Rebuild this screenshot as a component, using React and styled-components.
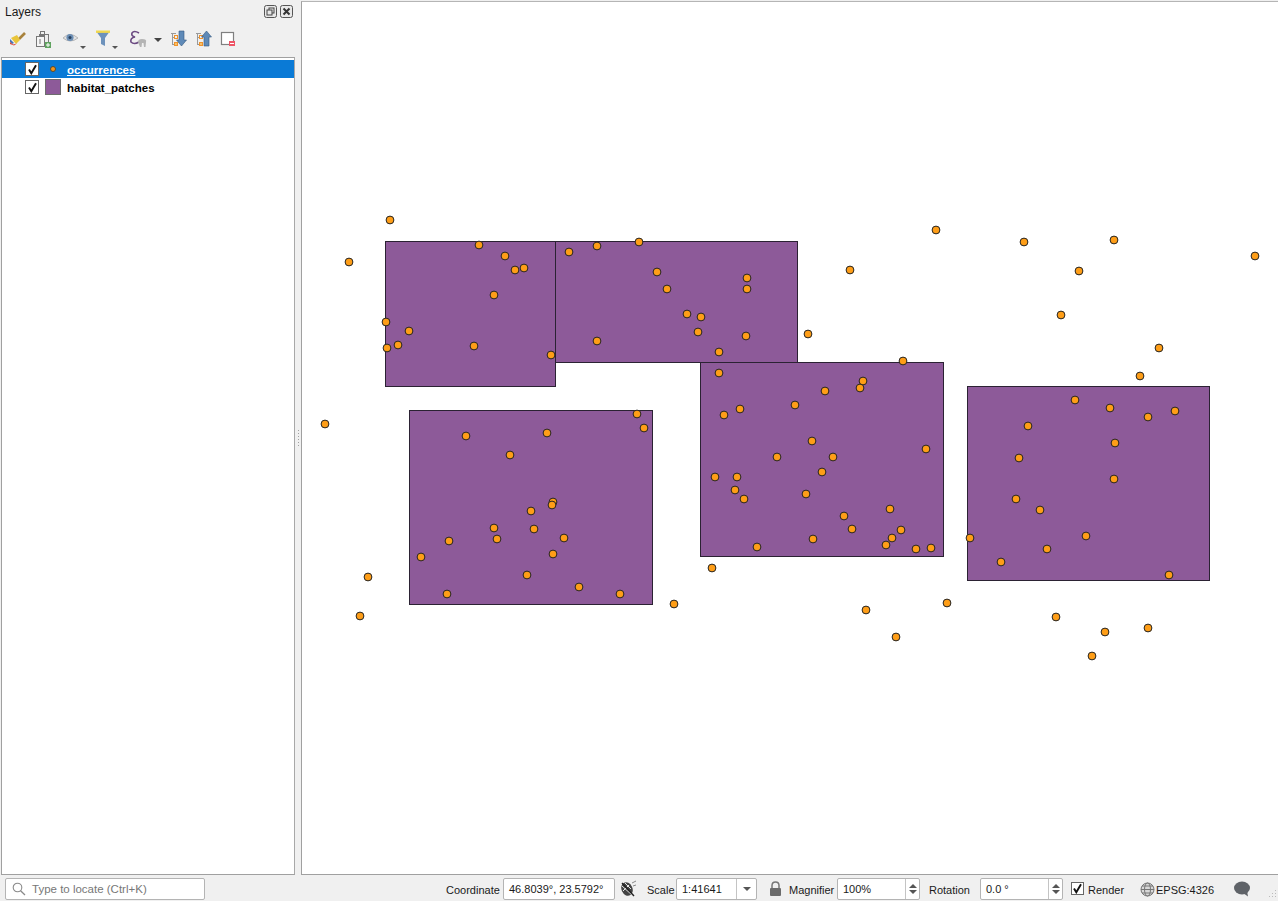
import React from 'react';
import styled, { createGlobalStyle } from 'styled-components';

const GlobalStyle = createGlobalStyle`
  html, body {
    margin: 0;
    padding: 0;
    height: 100%;
    overflow: hidden;
    background: #f0f0f0;
  }
  #root { height: 100%; }
`;

const Window = styled.div`
  width: 1278px;
  height: 901px;
  display: flex;
  flex-direction: column;
  background: #f0f0f0;
  font-family: 'Liberation Sans', Arial, sans-serif;
  font-size: 11px;
  color: #1a1a1a;
  overflow: hidden;
`;

const Main = styled.div`
  flex: 1;
  min-height: 0;
  display: flex;
  padding: 1px 0 0 1px;
`;

const Dock = styled.aside`
  width: 294px;
  display: flex;
  flex-direction: column;
`;

const DockTitle = styled.div`
  height: 21px;
  display: flex;
  align-items: center;
  justify-content: space-between;
  padding: 0 2px 0 4px;
  box-sizing: border-box;
  font-size: 12px;
`;

const DockButtons = styled.div`
  display: flex;
  gap: 3px;
  align-items: center;
`;

const Toolbar = styled.div`
  height: 35px;
  display: flex;
  align-items: center;
  padding-left: 7px;
  box-sizing: border-box;
`;

const ToolButton = styled.span`
  width: ${p => p.$w || 18}px;
  height: 20px;
  margin-right: ${p => p.$gap || 0}px;
  flex: none;
  display: block;
  svg { display: block; }
`;

const Tree = styled.div`
  flex: 1;
  background: #fff;
  border: 1px solid #a0a0a0;
  border-right-color: #a8a8a8;
  padding-top: 2px;
`;

const Row = styled.div`
  height: 18px;
  display: flex;
  align-items: center;
  padding-left: 23px;
  background: ${p => (p.$selected ? '#0a7ad6' : 'transparent')};
  color: ${p => (p.$selected ? '#fff' : '#000')};
  font-weight: 700;
  font-size: 11.5px;
`;

const RowText = styled.span`
  padding-top: 2px;
  text-decoration: ${p => (p.$selected ? 'underline' : 'none')};
`;

const Check = styled.span`
  width: 14px;
  height: 14px;
  flex: none;
  box-sizing: border-box;
  background: #fff;
  border: 1px solid #666;
  display: flex;
  align-items: center;
  justify-content: center;
`;

const Swatch = styled.span`
  width: 16px;
  height: 16px;
  margin-left: 6px;
  margin-right: 6px;
  flex: none;
  box-sizing: border-box;
  display: flex;
  align-items: center;
  justify-content: center;
  background: ${p => p.$fill || 'transparent'};
  border: ${p => (p.$fill ? '1px solid #6d6d6d' : 'none')};
`;

const Dot = styled.span`
  width: 6px;
  height: 6px;
  border-radius: 50%;
  background: #f5931a;
  border: 1px solid #5a4a2a;
  box-sizing: border-box;
`;

const Splitter = styled.div`
  width: 6px;
  flex: none;
  display: flex;
  flex-direction: column;
  align-items: center;
  justify-content: center;
  gap: 2px;
  box-sizing: border-box;
`;

const Grip = styled.i`
  width: 1px;
  height: 1px;
  background: #a0a0a0;
`;

const MapPane = styled.main`
  flex: 1;
  background: #fff;
  border-left: 1px solid #a0a0a0;
  border-top: 1px solid #b5b5b5;
  border-bottom: 1px solid #a0a0a0;
  svg { display: block; }
`;

const StatusBar = styled.footer`
  height: 26px;
  flex: none;
  display: flex;
  align-items: flex-start;
  box-sizing: border-box;
  padding: 3px 0 0 5px;
  position: relative;
`;

const Locator = styled.div`
  width: 200px;
  height: 22px;
  box-sizing: border-box;
  background: #fff;
  border: 1px solid #b4b4b4;
  border-radius: 2px;
  display: flex;
  align-items: center;
  gap: 6px;
  padding-left: 6px;
  color: #777;
  font-size: 11.5px;
  margin-right: 241px;
`;

const Label = styled.span`
  height: 22px;
  line-height: 24px;
  margin-left: ${p => p.$left || 0}px;
  white-space: nowrap;
  width: ${p => p.$w}px;
  flex: none;
`;

const Field = styled.div`
  width: ${p => p.$w}px;
  height: 22px;
  margin-left: ${p => p.$left || 0}px;
  flex: none;
  box-sizing: border-box;
  background: #fff;
  border: 1px solid #b4b4b4;
  border-radius: 2px;
  display: flex;
  align-items: center;
  justify-content: space-between;
  padding-left: 5px;
`;

const ComboArrow = styled.span`
  width: 20px;
  height: 20px;
  box-sizing: border-box;
  border-left: 1px solid #c4c4c4;
  display: flex;
  align-items: center;
  justify-content: center;
  &::after {
    content: '';
    border-left: 4px solid transparent;
    border-right: 4px solid transparent;
    border-top: 4px solid #555;
  }
`;

const Spin = styled.span`
  width: 14px;
  height: 20px;
  box-sizing: border-box;
  border-left: 1px solid #c4c4c4;
  display: flex;
  flex-direction: column;
  align-items: center;
  justify-content: center;
  gap: 2px;
  &::before {
    content: '';
    border-left: 4px solid transparent;
    border-right: 4px solid transparent;
    border-bottom: 4px solid #555;
  }
  &::after {
    content: '';
    border-left: 4px solid transparent;
    border-right: 4px solid transparent;
    border-top: 4px solid #555;
  }
`;

const StatusIcon = styled.span`
  width: ${p => p.$w}px;
  height: 22px;
  margin-left: ${p => p.$left || 0}px;
  flex: none;
  display: flex;
  align-items: center;
  justify-content: center;
`;

const StatusCheck = styled(Check)`
  width: 13px;
  height: 13px;
  margin: 4px 0 0 ${p => p.$left || 0}px;
`;

const SizeGrip = styled.svg`
  position: absolute;
  right: 1px;
  bottom: 1px;
`;

// left, top, right, bottom of each polygon
const patches = [
  [385, 241, 555, 386],
  [555, 241, 797, 362],
  [409, 410, 652, 604],
  [700, 362, 943, 556],
  [967, 386, 1209, 580],
];

const occurrences = [
  [390, 220], [349, 262], [325, 424], [368, 577], [360, 616], [674, 604], [712, 568], [808, 334],
  [850, 270], [936, 230], [1024, 242], [1079, 271], [1114, 240], [1255, 256], [1061, 315], [1159, 348],
  [1140, 376], [903, 361], [866, 610], [896, 637], [947, 603], [1056, 617], [1105, 632], [1148, 628],
  [1092, 656], [970, 538],
  [479, 245], [505, 256], [515, 270], [524, 268], [494, 295], [386, 322], [409, 331], [398, 345],
  [387, 348], [474, 346], [551, 355],
  [569, 252], [597, 246], [639, 242], [657, 272], [667, 289], [747, 278], [747, 289], [687, 314],
  [701, 317], [698, 332], [746, 336], [597, 341], [719, 352],
  [637, 414], [644, 428], [466, 436], [547, 433], [510, 455], [553, 502], [552, 505], [531, 511],
  [494, 528], [534, 529], [449, 541], [497, 539], [564, 538], [421, 557], [553, 554], [527, 575],
  [579, 587], [447, 594], [620, 594],
  [719, 373], [863, 381], [860, 388], [825, 391], [795, 405], [740, 409], [724, 415], [812, 441],
  [926, 449], [777, 457], [833, 457], [822, 472], [715, 477], [737, 477], [735, 490], [744, 499],
  [806, 494], [890, 509], [844, 516], [852, 529], [901, 530], [892, 538], [886, 545], [813, 539],
  [757, 547], [916, 549], [931, 548],
  [1075, 400], [1110, 408], [1148, 417], [1175, 411], [1028, 426], [1115, 443], [1019, 458], [1114, 479],
  [1016, 499], [1040, 510], [1086, 536], [1047, 549], [1001, 562], [1169, 575],
];

const Tick = () => (
  <svg width="11" height="11" viewBox="0 0 11 11">
    <path d="M2 5.5 L4.3 9.3 L9 1.2" fill="none" stroke="#111" strokeWidth="1.9" />
  </svg>
);

const FloatIcon = () => (
  <svg width="13" height="13" viewBox="0 0 13 13">
    <rect x="0.5" y="0.5" width="12" height="12" rx="2" fill="#e8e8e8" stroke="#555" />
    <rect x="5" y="3" width="5" height="5" fill="none" stroke="#444" />
    <rect x="3" y="5" width="5" height="5" fill="#e8e8e8" stroke="#444" />
  </svg>
);

const CloseIcon = () => (
  <svg width="13" height="13" viewBox="0 0 13 13">
    <rect x="0.5" y="0.5" width="12" height="12" rx="2" fill="#e8e8e8" stroke="#555" />
    <path d="M3.5 3.5 L9.5 9.5 M9.5 3.5 L3.5 9.5" stroke="#333" strokeWidth="2" />
  </svg>
);

const StyleIcon = () => (
  <svg width="18" height="20" viewBox="0 0 18 20">
    <path d="M11 9 L17 3" stroke="#a8823c" strokeWidth="2.6" />
    <path d="M3 8 L9 5 L12 10 L8 14 Z" fill="#e9c53a" />
    <path d="M2 9 L6 13 L4 14 L2 12 Z" fill="#4a77b8" />
    <path d="M2 12 L5 14.5 L9 13.5 L6 15.5 L2 14 Z" fill="#d9483c" />
  </svg>
);

const AddGroupIcon = () => (
  <svg width="18" height="20" viewBox="0 0 18 20">
    <rect x="5.5" y="4.5" width="9" height="11" fill="#eee" stroke="#777" />
    <rect x="2.5" y="6.5" width="8" height="10" fill="#f5f5f5" stroke="#777" />
    <rect x="6.5" y="1.5" width="4" height="4" fill="none" stroke="#777" />
    <path d="M6 9 V14" stroke="#777" />
    <rect x="11" y="12" width="6" height="6" fill="#5fa35f" />
    <path d="M14 13 V17 M12 15 H16" stroke="#fff" />
  </svg>
);

const EyeIcon = () => (
  <svg width="24" height="20" viewBox="0 0 24 20">
    <path d="M1 8 Q8 1 16 8 Q8 14 1 8 Z" fill="#e4e4e4" stroke="#b5b5b5" />
    <circle cx="8" cy="7.5" r="3.6" fill="#6d8fb5" />
    <circle cx="8" cy="7.5" r="1.5" fill="#27405f" />
    <path d="M18 16 H24 L21 19 Z" fill="#555" />
  </svg>
);

const FunnelIcon = () => (
  <svg width="24" height="20" viewBox="0 0 24 20">
    <path d="M1 1 H15 L10 8 V16 L6 14 V8 Z" fill="#6d92bb" />
    <rect x="1" y="0.5" width="14" height="2.4" fill="#f1d84d" />
    <path d="M17 16 H23 L20 19 Z" fill="#555" />
  </svg>
);

const ExpressionIcon = () => (
  <svg width="20" height="20" viewBox="0 0 20 20">
    <path d="M10 3 Q5 0 3 3 Q2 6 6 7 Q1 8 2 12 Q5 15 10 12" fill="none" stroke="#6b4a82" strokeWidth="1.6" />
    <path d="M9 12 Q9 9 13 9 Q18 9 17 12 L16.5 17 H15 L14.5 13 H13 L12.5 17 H11 Z" fill="#b4b4b4" />
  </svg>
);

const MenuArrowIcon = () => (
  <svg width="12" height="20" viewBox="0 0 12 20">
    <path d="M1 8 H9 L5 12 Z" fill="#444" />
  </svg>
);

const Tree3Icon = ({ up }) => (
  <svg width="18" height="20" viewBox="0 0 18 20">
    <path d="M1 3.5 H6 M2.5 3 V15 M2.5 7.5 H5 M2.5 14.5 H5" stroke="#999" />
    <rect x="4.5" y="5.5" width="3" height="3" fill="none" stroke="#f0932b" />
    <rect x="4.5" y="12.5" width="3" height="3" fill="#f5c16c" stroke="#f0932b" />
    {up ? (
      <path d="M11.5 1 L16.5 7 H14 V16 H9 V7 H6.5 Z" fill="#5f8ab8" stroke="#36597f" strokeWidth="0.6" />
    ) : (
      <path d="M9 1 H14 V10 H16.5 L11.5 16 L6.5 10 H9 Z" fill="#5f8ab8" stroke="#36597f" strokeWidth="0.6" />
    )}
  </svg>
);

const RemoveIcon = () => (
  <svg width="18" height="20" viewBox="0 0 18 20">
    <rect x="1.5" y="2.5" width="12" height="12" fill="#fff" stroke="#808080" strokeWidth="1.2" />
    <rect x="9" y="11" width="6" height="5" fill="#ee5566" />
    <path d="M10 13.5 H14" stroke="#fff" />
  </svg>
);

const SearchIcon = () => (
  <svg width="14" height="14" viewBox="0 0 14 14">
    <circle cx="5.5" cy="5.5" r="4.3" fill="none" stroke="#8a8a8a" strokeWidth="1.1" />
    <path d="M8.6 8.8 L13 13" stroke="#8a8a8a" strokeWidth="1.3" />
  </svg>
);

const MouseIcon = () => (
  <svg width="17" height="18" viewBox="0 0 17 18">
    <ellipse cx="7" cy="9" rx="5.5" ry="7" fill="#444" transform="rotate(-25 7 9)" />
    <path d="M2 6 L12 15 M5 3 L11 9 M3 11 L9 5" stroke="#e6e6e6" strokeWidth="1" />
    <path d="M12 3 L16 1 M13 6 L16 5" stroke="#888" />
    <path d="M2 3 L14 16" stroke="#222" strokeWidth="1.4" />
  </svg>
);

const LockIcon = () => (
  <svg width="13" height="16" viewBox="0 0 13 16">
    <path d="M3 7 V4.5 Q3 1 6.5 1 Q10 1 10 4.5 V7" fill="none" stroke="#777" strokeWidth="1.5" />
    <rect x="1" y="7" width="11" height="8" rx="1" fill="#6c6c6c" />
  </svg>
);

const GlobeIcon = () => (
  <svg width="15" height="15" viewBox="0 0 15 15">
    <circle cx="7.5" cy="7.5" r="6.5" fill="#d8d8d8" stroke="#777" />
    <ellipse cx="7.5" cy="7.5" rx="3" ry="6.5" fill="none" stroke="#777" />
    <path d="M1 7.5 H14 M2 4 H13 M2 11 H13" stroke="#777" />
  </svg>
);

const MessageIcon = () => (
  <svg width="18" height="16" viewBox="0 0 18 16">
    <ellipse cx="9" cy="7" rx="8" ry="6.5" fill="#5f6368" />
    <path d="M10 12 L15 15.5 L14 10 Z" fill="#5f6368" />
  </svg>
);

const App = () => (
  <Window>
    <GlobalStyle />
    <Main>
      <Dock>
        <DockTitle>
          <span>Layers</span>
          <DockButtons>
            <FloatIcon />
            <CloseIcon />
          </DockButtons>
        </DockTitle>
        <Toolbar>
          <ToolButton $gap={8}><StyleIcon /></ToolButton>
          <ToolButton $gap={10}><AddGroupIcon /></ToolButton>
          <ToolButton $w={24} $gap={9}><EyeIcon /></ToolButton>
          <ToolButton $w={24} $gap={10}><FunnelIcon /></ToolButton>
          <ToolButton $w={20} $gap={4}><ExpressionIcon /></ToolButton>
          <ToolButton $w={12} $gap={5}><MenuArrowIcon /></ToolButton>
          <ToolButton $gap={7}><Tree3Icon /></ToolButton>
          <ToolButton $gap={7}><Tree3Icon up /></ToolButton>
          <ToolButton><RemoveIcon /></ToolButton>
        </Toolbar>
        <Tree>
          <Row $selected>
            <Check><Tick /></Check>
            <Swatch><Dot /></Swatch>
            <RowText $selected>occurrences</RowText>
          </Row>
          <Row>
            <Check><Tick /></Check>
            <Swatch $fill="#8d5a99" />
            <RowText>habitat_patches</RowText>
          </Row>
        </Tree>
      </Dock>
      <Splitter>
        {Array.from({ length: 6 }, (_, i) => <Grip key={i} />)}
      </Splitter>
      <MapPane>
        <svg width="976" height="873" viewBox="302 2 976 873">
          {patches.map(([x0, y0, x1, y1]) => (
            <rect key={`${x0}-${y0}`} x={x0 + 0.5} y={y0 + 0.5} width={x1 - x0} height={y1 - y0} fill="#8d5a99" stroke="#2b2233" strokeWidth="1" />
          ))}
          {occurrences.map(([x, y]) => (
            <circle key={`${x}-${y}`} cx={x} cy={y} r="3.9" fill="#ff9e17" stroke="#232323" strokeWidth="1" />
          ))}
        </svg>
      </MapPane>
    </Main>
    <StatusBar>
      <Locator>
        <SearchIcon />
        <span>Type to locate (Ctrl+K)</span>
      </Locator>
      <Label $w={53}>Coordinate</Label>
      <Field $w={112} $left={4}>46.8039°, 23.5792°</Field>
      <StatusIcon $w={18} $left={4}><MouseIcon /></StatusIcon>
      <Label $w={29} $left={10}>Scale</Label>
      <Field $w={81}>1:41641<ComboArrow /></Field>
      <StatusIcon $w={14} $left={11}><LockIcon /></StatusIcon>
      <Label $w={48} $left={7}>Magnifier</Label>
      <Field $w={83}>100%<Spin /></Field>
      <Label $w={51} $left={9}>Rotation</Label>
      <Field $w={83}>0.0 °<Spin /></Field>
      <StatusCheck $left={8}><Tick /></StatusCheck>
      <Label $w={52} $left={4}>Render</Label>
      <StatusIcon $w={15}><GlobeIcon /></StatusIcon>
      <Label $w={77} $left={1}>EPSG:4326</Label>
      <StatusIcon $w={18}><MessageIcon /></StatusIcon>
      <SizeGrip width="12" height="12" viewBox="0 0 12 12">
        <path d="M10 2 h1 v1 h-1z M7 5 h1 v1 h-1z M10 5 h1 v1 h-1z M4 8 h1 v1 h-1z M7 8 h1 v1 h-1z M10 8 h1 v1 h-1z" fill="#bbb" />
      </SizeGrip>
    </StatusBar>
  </Window>
);

export default App;
